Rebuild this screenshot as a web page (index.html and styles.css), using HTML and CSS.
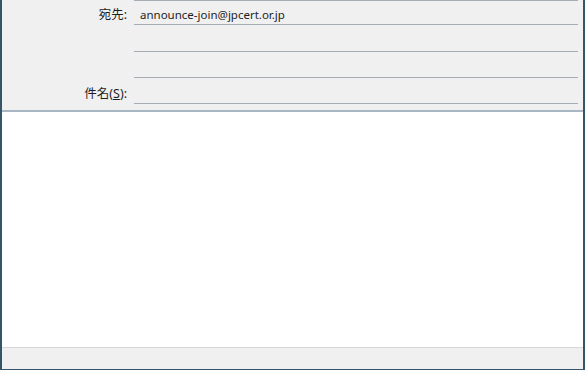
FILE: index.html
```html
<!DOCTYPE html>
<html lang="ja">
<head>
    <meta charset="UTF-8">
    <title>メッセージ作成</title>
    <link rel="stylesheet" href="styles.css">
</head>
<body>
    <div class="window">
        <div class="header">
            <div class="row first">
                <div class="label">宛先:</div>
                <div class="field">announce-join@jpcert.or.jp</div>
            </div>
            <div class="row second">
                <div class="label"></div>
                <div class="field"></div>
            </div>
            <div class="row">
                <div class="label"></div>
                <div class="field"></div>
            </div>
            <div class="row">
                <div class="label">件名(<u>S</u>):</div>
                <div class="field"></div>
            </div>
        </div>
        <div class="body"></div>
        <div class="status"></div>
    </div>
</body>
</html>
```

FILE: styles.css
```css
html, body {
    margin: 0;
    padding: 0;
}
body {
    font-family: "Segoe UI", "Noto Sans", "Noto Sans CJK JP", sans-serif;
    font-size: 11.5px;
    color: #1e1e1e;
}
.window {
    width: 585px;
    height: 370px;
    box-sizing: border-box;
    border-left: 2px solid #34556a;
    border-right: 2px solid #34556a;
    border-bottom: 1px solid #34556a;
    display: flex;
    flex-direction: column;
    background: #f0f0f0;
}
.header {
    height: 110px;
    padding-right: 5px;
    border-bottom: 2px solid #a9b6c4;
}
.row {
    display: flex;
    height: 26px;
}
.row.first {
    height: 25px;
}
.row.second {
    height: 27px;
}
.label {
    width: 132px;
    text-align: right;
    padding-right: 7px;
    font-size: 12.5px;
    line-height: 20px;
    padding-top: 6px;
    box-sizing: border-box;
}
.row.first .label {
    padding-top: 5px;
}
.field {
    flex: 1;
    box-sizing: border-box;
    border-bottom: 1px solid #a5acb4;
    padding-left: 6px;
    line-height: 20px;
    padding-top: 5px;
}
.row.first .field {
    border-top: 1px solid #a5acb4;
    padding-top: 4px;
}
.body {
    flex: 1;
    background: #fff;
    border-bottom: 1px solid #d6d6d6;
}
.status {
    height: 21px;
    background: #f0f0f0;
}
```
